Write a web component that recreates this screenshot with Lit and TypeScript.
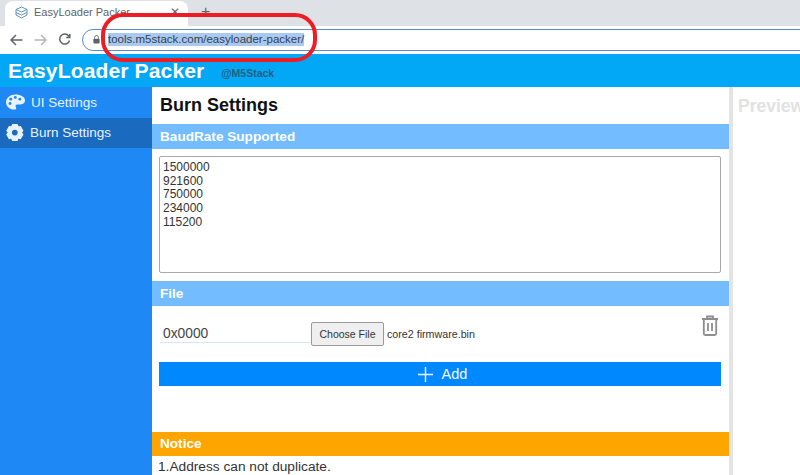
import { LitElement, html, css, svg } from "lit";
import { customElement } from "lit/decorators.js";

const bauds = ["1500000", "921600", "750000", "234000", "115200"];

// font-awesome style glyphs, redrawn by hand
const palette = svg`<path fill="currentColor" d="M10 1C4.5 1 0 4.6 0 9.2c0 3.9 3.3 7.8 8.6 7.8 2.4 0 2.6-1.6 1.8-2.6-.9-1.2-.3-2.8 1.4-2.8h2.6c2.4 0 5.6-1 5.6-4.2C20 3.6 15.500 1 10 1z"/><g fill="#1e88f5"><circle cx="4.200" cy="10.600" r="1.500"/><circle cx="5" cy="6" r="1.500"/><circle cx="9.800" cy="4.200" r="1.500"/><circle cx="14.600" cy="6" r="1.500"/></g>`;
const gear = svg`<path fill="currentColor" d="M6 1.300h6l1 2.400 2.600-.3 3 5.200L17 10.700l1.600 2.100-3 5.200-2.600-.3-1 2.300H6l-1-2.300-2.600.3-3-5.200L1 10.700-.6 8.600l3-5.200 2.600.3z" transform="translate(.8 -.6) scale(.95)"/><circle cx="9.300" cy="9.600" r="3" fill="#1a6bc0"/>`;

@customElement("app-root")
export class AppRoot extends LitElement {
    static styles = css`
    :host {
        display: block;
        position: relative;
        width: 800px;
        height: 475px;
        overflow: hidden;
        background: #ffffff;
        font-family: "Liberation Sans", Arial, sans-serif;
        color: #333333;
    }

    .tabstrip {
        height: 26px;
        background: #dee1e6;
        display: flex;
        align-items: flex-end;
        gap: 13px;
        padding-left: 5px;
    }

    .tab {
        width: 183px;
        height: 25px;
        box-sizing: border-box;
        background: #ffffff;
        border-radius: 8px 8px 0 0;
        display: flex;
        align-items: center;
        gap: 6px;
        padding: 0 0 3px 10px;
        font-size: 11px;
        color: #5f6368;
    }

    .tab .title {
        flex: 1;
        white-space: nowrap;
    }

    .tab .close {
        font-size: 12px;
        margin-right: 8px;
    }

    .newtab {
        font-size: 16px;
        color: #5f6368;
        padding-bottom: 5px;
    }

    .toolbar {
        height: 27px;
        display: flex;
        align-items: center;
        background: #ffffff;
        padding-left: 10px;
        gap: 11px;
    }

    .toolbar svg {
        flex: none;
    }

    .address {
        flex: 1;
        height: 22px;
        margin-left: 0;
        margin-right: -14px;
        box-sizing: border-box;
        border: 1.500px solid #5a8ad0;
        border-radius: 11px 0 0 11px;
        display: flex;
        align-items: center;
        gap: 8px;
        padding-left: 10px;
    }

    .url {
        font-size: 11.500px;
        color: #35404d;
        background: #a9c9f0;
        line-height: 13px;
        white-space: nowrap;
    }

    .appbar {
        height: 33px;
        margin-top: 1px;
        background: #02a8f6;
        display: flex;
        align-items: center;
        padding-left: 8px;
        gap: 17px;
    }

    .appbar h1 {
        margin: 0;
        font-size: 21.100px;
        font-weight: 700;
        color: #ffffff;
        letter-spacing: 0.1px;
    }

    .appbar small {
        font-size: 10.500px;
        font-weight: 700;
        color: #255f83;
        padding-top: 5px;
    }

    .body {
        display: flex;
        height: 388px;
    }

    .sidebar {
        width: 152px;
        flex: none;
        background: #1e88f5;
        padding-top: 1px;
        box-sizing: border-box;
    }

    .item {
        height: 30px;
        box-sizing: border-box;
        display: flex;
        align-items: center;
        gap: 6px;
        padding: 0 0 2px 6px;
        font-size: 13.500px;
        color: #e8f2fd;
    }

    .item.active {
        background: #1a6bc0;
    }

    .main {
        width: 577px;
        flex: none;
        background: #ffffff;
    }

    .main h2 {
        margin: 0;
        height: 37px;
        line-height: 37px;
        padding-left: 8px;
        font-size: 18px;
        color: #111111;
    }

    .bar {
        height: 25px;
        line-height: 25px;
        padding-left: 8px;
        font-size: 13.600px;
        font-weight: 700;
        color: #ffffff;
        background: #73bcff;
    }

    .bar.notice {
        height: 24px;
        line-height: 23px;
        background: #ffa500;
    }

    .baud-wrap {
        padding: 7px 8px 8px 7px;
    }

    .bauds {
        height: 117px;
        box-sizing: border-box;
        border: 1px solid #a9a9a9;
        border-radius: 2px;
        padding: 4px 3px;
        font-size: 12px;
        line-height: 13.700px;
        color: #333333;
    }

    .file-row {
        display: flex;
        align-items: flex-start;
        height: 56px;
        padding: 14px 8px 0 8px;
        box-sizing: border-box;
    }

    .addr {
        width: 151px;
        height: 23px;
        box-sizing: border-box;
        border-bottom: 1px solid #d4e6f7;
        padding: 6px 0 0 3px;
        font-size: 13.800px;
        color: #444444;
    }

    .choose {
        width: 73px;
        height: 24px;
        margin-top: 2px;
        padding: 0;
        font: 10.500px "Liberation Sans", Arial, sans-serif;
        color: #333333;
        background: #efefef;
        border: 1px solid #9a9a9a;
        border-radius: 2px;
    }

    .filename {
        flex: 1;
        font-size: 10.700px;
        color: #333333;
        padding: 8px 0 0 3px;
    }

    .trash {
        margin: -6px 2px 0 0;
    }

    .add-wrap {
        padding: 0 8px 0 7px;
        height: 70px;
    }

    .add {
        height: 24px;
        background: #0088ff;
        color: #f2f8ff;
        font-size: 14.500px;
        display: flex;
        align-items: center;
        justify-content: center;
        gap: 9px;
        padding-left: 5px;
    }

    .tip {
        padding: 3px 0 0 6px;
        font-size: 13.700px;
        color: #333333;
    }

    .scroll {
        width: 4px;
        flex: none;
        background: #e4e4e4;
    }

    .preview {
        flex: 1;
        padding: 9px 0 0 5px;
        font-size: 17.500px;
        font-weight: 700;
        color: #e2e2e2;
        white-space: nowrap;
        overflow: hidden;
    }

    .ring {
        position: absolute;
        left: 101px;
        top: 13px;
        width: 216px;
        height: 49px;
        box-sizing: border-box;
        border: 4px solid #ee1c25;
        border-radius: 22px;
    }
    `

    render() {
        return html`
        <div class="tabstrip">
            <div class="tab">
                <svg width="13" height="13" viewBox="0 0 13 13" fill="none" stroke="#5b93b5" stroke-width="1">
                    <path d="M6.500 1 12 3.500V9L6.500 12 1 9V3.500z"/>
                    <path d="M1 3.500 6.500 6 12 3.500M1 6.500 6.500 9 12 6.500"/>
                </svg>
                <span class="title">EasyLoader Packer</span>
                <span class="close">✕</span>
            </div>
            <span class="newtab">+</span>
        </div>
        <div class="toolbar">
            <svg width="13" height="12" viewBox="0 0 13 12" fill="none" stroke="#5f6368" stroke-width="1.500">
                <path d="M12.500 6H1.500M6 1 1 6l5 5"/>
            </svg>
            <svg width="13" height="12" viewBox="0 0 13 12" fill="none" stroke="#b4b7bb" stroke-width="1.500">
                <path d="M.5 6h11M7 1l5 5-5 5"/>
            </svg>
            <svg width="13" height="13" viewBox="0 0 13 13" fill="none" stroke="#5f6368" stroke-width="1.500">
                <path d="M11 3.500A5 5 0 1 0 11.500 7.500"/>
                <path d="M11.800 1v3.600H8.200" />
            </svg>
            <div class="address">
                <svg width="7" height="9" viewBox="0 0 9 11">
                    <rect x="0.500" y="4.500" width="8" height="6" rx="1" fill="#5f6368"/>
                    <path d="M2 4.500V3a2.500 2.500 0 0 1 5 0v1.500" fill="none" stroke="#5f6368" stroke-width="1.200"/>
                </svg>
                <span class="url">tools.m5stack.com/easyloader-packer/</span>
            </div>
        </div>
        <div class="appbar">
            <h1>EasyLoader Packer</h1>
            <small>@M5Stack</small>
        </div>
        <div class="body">
            <nav class="sidebar">
                <div class="item">
                    <svg width="19" height="18" viewBox="0 0 20 18">${palette}</svg>
                    UI Settings
                </div>
                <div class="item active">
                    <svg width="18" height="19" viewBox="0 0 19 19">${gear}</svg>
                    Burn Settings
                </div>
            </nav>
            <section class="main">
                <h2>Burn Settings</h2>
                <div class="bar">BaudRate Supported</div>
                <div class="baud-wrap">
                    <div class="bauds">
                        ${bauds.map((b) => html`<div>${b}</div>`)}
                    </div>
                </div>
                <div class="bar">File</div>
                <div class="file-row">
                    <div class="addr">0x0000</div>
                    <button class="choose">Choose File</button>
                    <span class="filename">core2 firmware.bin</span>
                    <svg class="trash" width="18" height="22" viewBox="0 0 18 22" fill="none" stroke="#8e8e8e" stroke-width="1.800">
                        <path d="M1 5h16M6 5V2.500h6V5"/>
                        <path d="M2.800 5v14.500a1.500 1.500 0 0 0 1.500 1.500h9.400a1.500 1.500 0 0 0 1.500-1.500V5"/>
                        <path d="M7 9v8M11 9v8"/>
                    </svg>
                </div>
                <div class="add-wrap">
                    <div class="add">
                        <svg width="15" height="15" viewBox="0 0 15 15" stroke="#f2f8ff" stroke-width="1.400">
                            <path d="M7.500 0v15M0 7.500h15"/>
                        </svg>
                        Add
                    </div>
                </div>
                <div class="bar notice">Notice</div>
                <div class="tip">1.Address can not duplicate.</div>
            </section>
            <div class="scroll"></div>
            <div class="preview">Preview</div>
        </div>
        <div class="ring"></div>
        `
    }
}
